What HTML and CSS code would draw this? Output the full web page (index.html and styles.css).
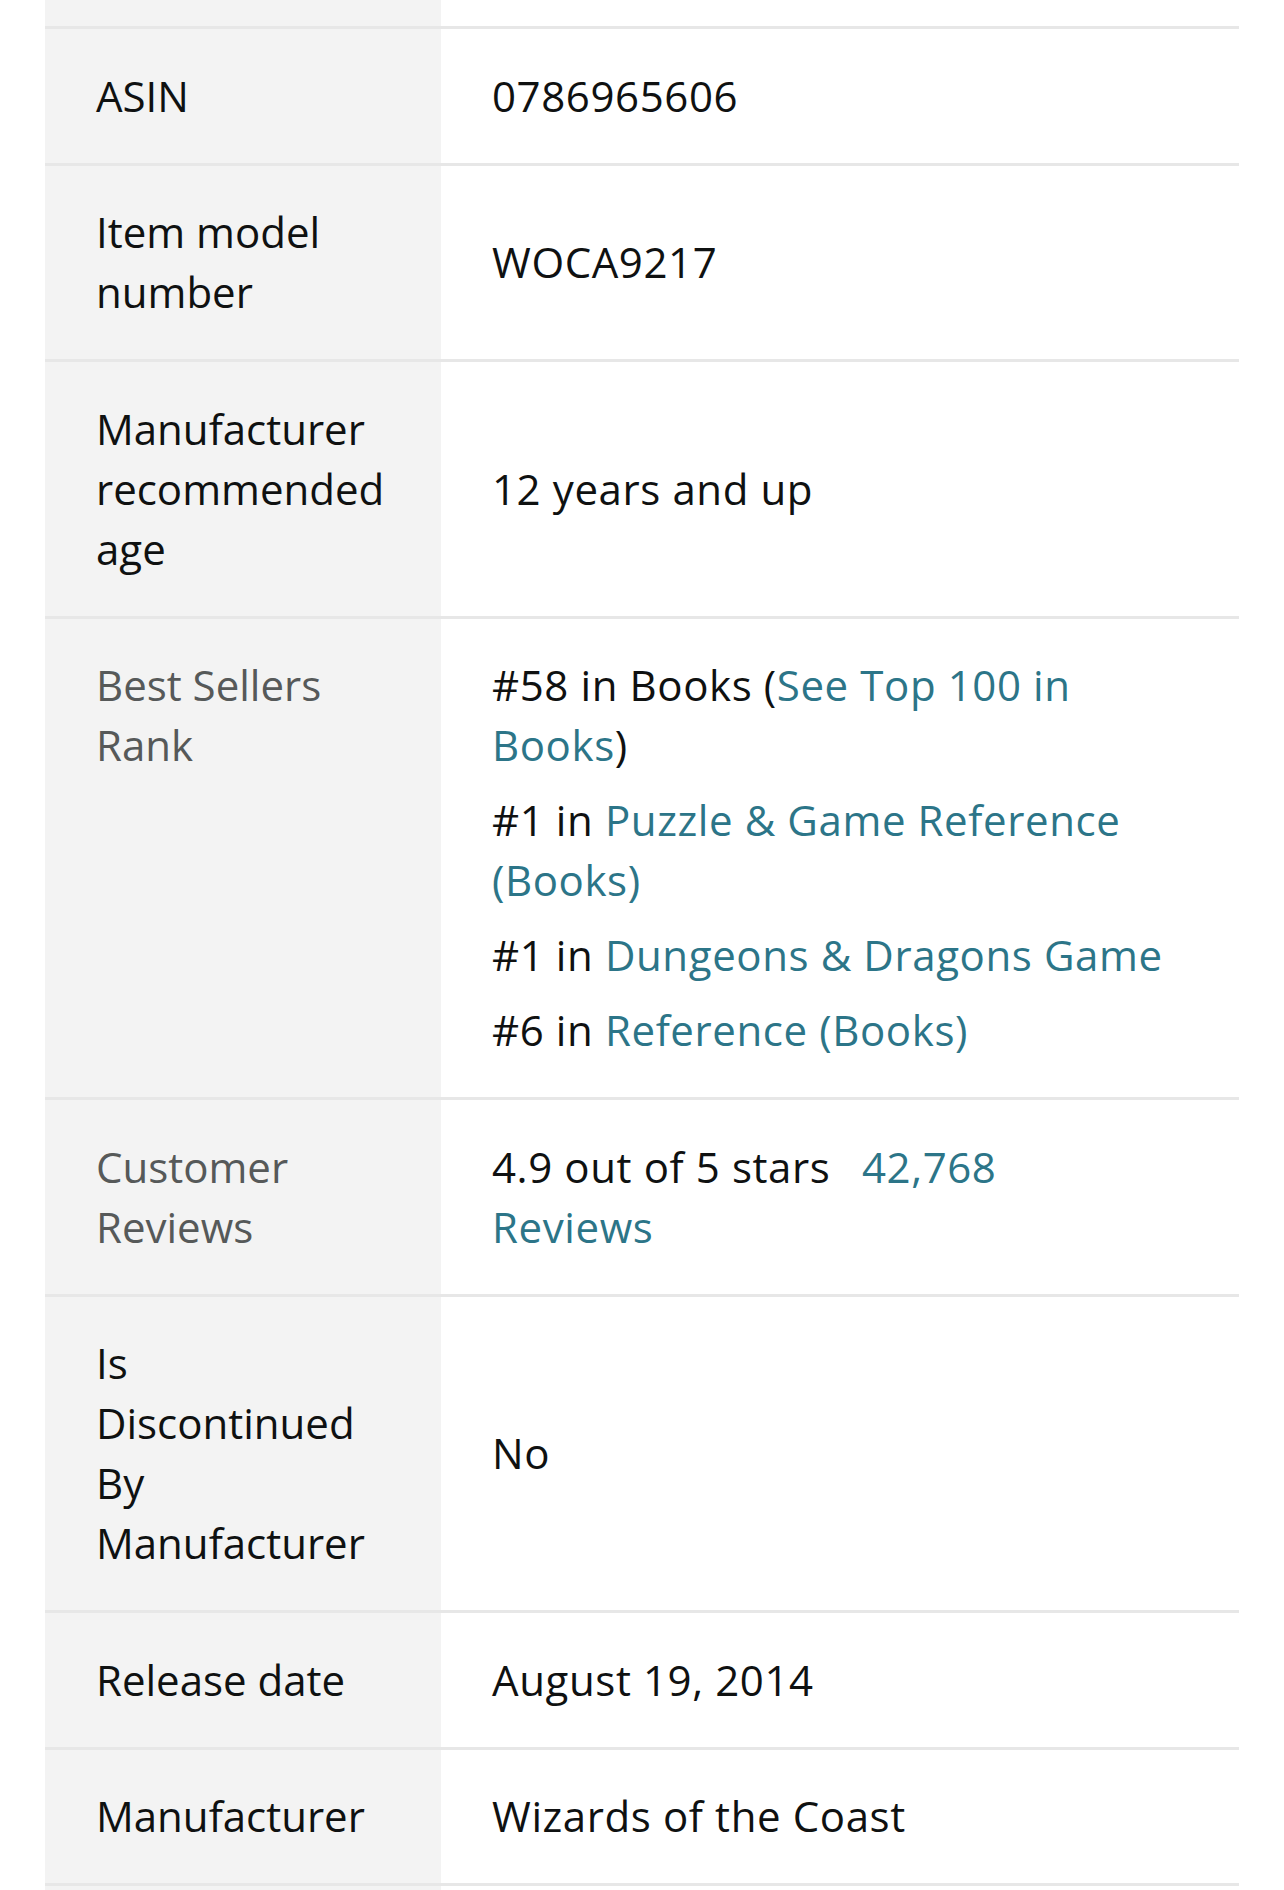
FILE: index.html
```html
<!DOCTYPE html>
<html lang="en">
<head>
<meta charset="utf-8">
<title>Product details</title>
<link rel="stylesheet" href="styles.css">
</head>
<body>
<div class="page">
  <table class="details">
    <colgroup>
      <col class="col-label">
      <col class="col-value">
    </colgroup>
    <tbody>
      <tr class="cut-row">
        <th></th>
        <td></td>
      </tr>
      <tr>
        <th>ASIN</th>
        <td>0786965606</td>
      </tr>
      <tr>
        <th>Item model number</th>
        <td>WOCA9217</td>
      </tr>
      <tr>
        <th>Manufacturer recommended age</th>
        <td>12 years and up</td>
      </tr>
      <tr>
        <th class="muted">Best Sellers Rank</th>
        <td>
          <ul class="ranks">
            <li>#58 in Books (<a href="#">See Top 100 in Books</a>)</li>
            <li>#1 in <a href="#">Puzzle &amp; Game Reference (Books)</a></li>
            <li>#1 in <a href="#">Dungeons &amp; Dragons Game</a></li>
            <li>#6 in <a href="#">Reference (Books)</a></li>
          </ul>
        </td>
      </tr>
      <tr>
        <th class="muted">Customer Reviews</th>
        <td>4.9 out of 5 stars <a class="review-link" href="#">42,768 Reviews</a></td>
      </tr>
      <tr>
        <th>Is Discontinued By Manufacturer</th>
        <td>No</td>
      </tr>
      <tr>
        <th>Release date</th>
        <td>August 19, 2014</td>
      </tr>
      <tr>
        <th>Manufacturer</th>
        <td>Wizards of the Coast</td>
      </tr>
      <tr class="cut-row">
        <th></th>
        <td></td>
      </tr>
    </tbody>
  </table>
</div>
</body>
</html>
```
FILE: styles.css
```css
html, body {
  margin: 0;
  padding: 0;
  background: #ffffff;
}

.page {
  height: 1890px;
  overflow: hidden;
  padding: 0 45px;
  font-family: "Open Sans", "Noto Sans", "Liberation Sans", sans-serif;
  font-size: 42px;
  line-height: 60px;
  color: #0f1111;
}

.details {
  width: 1194px;
  border-collapse: collapse;
  table-layout: fixed;
}

.col-label {
  width: 396px;
}

.col-value {
  width: 798px;
}

.details th,
.details td {
  border-bottom: 3px solid #e7e7e7;
  vertical-align: middle;
  text-align: left;
}

.details th {
  background: #f3f3f3;
  font-weight: 400;
  padding: 36.75px 47px 36.75px 51px;
}

.details td {
  background: #ffffff;
  padding: 36.75px 72px 36.75px 51px;
  letter-spacing: 0.6px;
}

.details .cut-row th,
.details .cut-row td {
  padding: 0;
  height: 26px;
}

.details th.muted {
  color: #565959;
  vertical-align: top;
}

.details a {
  color: #2c7588;
  text-decoration: none;
}

.review-link {
  margin-left: 20px;
}

.ranks {
  list-style: none;
  margin: 0;
  padding: 0;
}

.ranks li {
  margin: 0 0 15px;
}

.ranks li:last-child {
  margin-bottom: 0;
}
```
